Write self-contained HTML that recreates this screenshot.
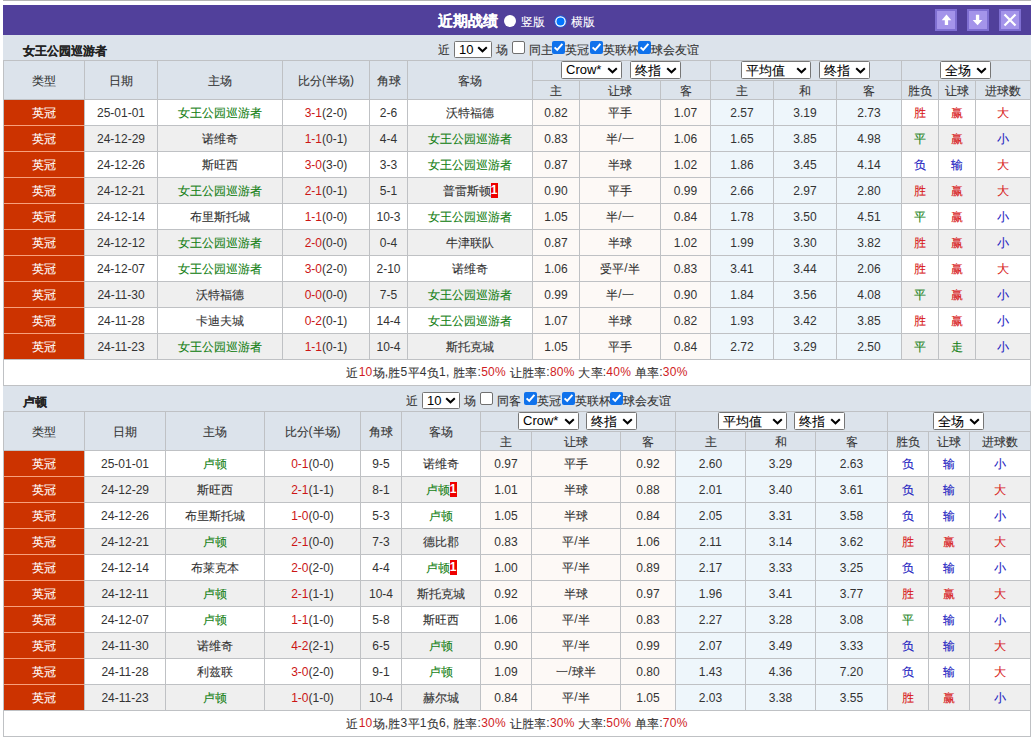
<!DOCTYPE html>
<html><head><meta charset="utf-8"><style>
html,body{margin:0;padding:0;background:#fff;width:1033px;height:739px;overflow:hidden;position:relative;font-family:"Liberation Sans",sans-serif;}
.c{position:absolute;display:flex;align-items:center;justify-content:center;white-space:nowrap;}
.sel{position:absolute;background:#fff;border:1px solid #767676;border-radius:1.5px;color:#000;white-space:nowrap;}
.k{position:relative;top:1px;-webkit-text-stroke:0.1px}
.badge{display:inline-block;background:#e00;color:#fff;font-weight:bold;font-size:12px;width:7px;height:15px;line-height:15px;text-align:center;vertical-align:middle;}
</style></head><body>
<div style="position:absolute;left:3px;top:0;width:1028px;height:1px;background:#b4b4b4"></div>
<div style="position:absolute;left:3px;top:5px;width:1028px;height:30px;background:#51409b;"></div>
<div style="position:absolute;left:438px;top:5px;height:30px;line-height:30px;font-size:15px;font-weight:bold;color:#fff"><span class="k">近期战绩</span></div>
<div style="position:absolute;left:504px;top:15px;width:12px;height:12px;border-radius:50%;background:#fff"></div>
<div style="position:absolute;left:521px;top:6px;height:30px;line-height:30px;font-size:12px;color:#fff;white-space:nowrap"><span class="k">竖版</span></div>
<svg style="position:absolute;left:554px;top:15px" width="13" height="13" viewBox="0 0 13 13"><circle cx="6.5" cy="6.5" r="6.2" fill="#1f5fd8"/><circle cx="6.5" cy="6.5" r="5.3" fill="#fff"/><circle cx="6.5" cy="6.5" r="4" fill="#0075ff"/></svg>
<div style="position:absolute;left:571px;top:6px;height:30px;line-height:30px;font-size:12px;color:#fff;white-space:nowrap"><span class="k">横版</span></div>
<div style="position:absolute;left:935px;top:9px;width:18px;height:18px;background:#a494ea;border:2px solid #7f6fd2"><svg style="position:absolute;left:-2px;top:-2px" width="22" height="22" viewBox="0 0 22 22"><path d="M11.5 5.5 L16.3 11.2 L13.1 11.2 L13.1 16 L9.8 16 L9.8 11.2 L6.7 11.2 Z" fill="#fff"/></svg></div>
<div style="position:absolute;left:967px;top:9px;width:18px;height:18px;background:#a494ea;border:2px solid #7f6fd2"><svg style="position:absolute;left:-2px;top:-2px" width="22" height="22" viewBox="0 0 22 22"><path d="M10.6 16.3 L15.4 11 L12.2 11 L12.2 5.7 L8.9 5.7 L8.9 11 L5.7 11 Z" fill="#fff"/></svg></div>
<div style="position:absolute;left:999px;top:9px;width:18px;height:18px;background:#a494ea;border:2px solid #7f6fd2"><svg style="position:absolute;left:-2px;top:-2px" width="22" height="22" viewBox="0 0 22 22"><path d="M5.5 5.5 L16.5 16.5 M16.5 5.5 L5.5 16.5" stroke="#fff" stroke-width="2.2"/></svg></div>
<div style="position:absolute;left:3px;top:35px;width:1028px;height:25px;background:#dce3eb;"></div>
<div style="position:absolute;left:23px;top:38px;height:25px;line-height:25px;font-size:12px;font-weight:bold;color:#222"><span class="k">女王公园巡游者</span></div>
<div style="position:absolute;left:3px;top:60px;width:1028px;height:39px;background:#dce3eb;"></div>
<div style="position:absolute;left:3px;top:100px;width:1027px;height:25px;background:#fff;"></div>
<div style="position:absolute;left:4px;top:100px;width:80px;height:25px;background:#cc3300;"></div>
<div style="position:absolute;left:533px;top:100px;width:177px;height:25px;background:#fdf9f6;"></div>
<div style="position:absolute;left:711px;top:100px;width:190px;height:25px;background:#eef6fb;"></div>
<div style="position:absolute;left:3px;top:126px;width:1027px;height:25px;background:#efefef;"></div>
<div style="position:absolute;left:4px;top:125px;width:80px;height:26px;background:#cc3300;"></div>
<div style="position:absolute;left:533px;top:126px;width:177px;height:25px;background:#fdf9f6;"></div>
<div style="position:absolute;left:711px;top:126px;width:190px;height:25px;background:#eef6fb;"></div>
<div style="position:absolute;left:3px;top:152px;width:1027px;height:25px;background:#fff;"></div>
<div style="position:absolute;left:4px;top:151px;width:80px;height:26px;background:#cc3300;"></div>
<div style="position:absolute;left:533px;top:152px;width:177px;height:25px;background:#fdf9f6;"></div>
<div style="position:absolute;left:711px;top:152px;width:190px;height:25px;background:#eef6fb;"></div>
<div style="position:absolute;left:3px;top:178px;width:1027px;height:25px;background:#efefef;"></div>
<div style="position:absolute;left:4px;top:177px;width:80px;height:26px;background:#cc3300;"></div>
<div style="position:absolute;left:533px;top:178px;width:177px;height:25px;background:#fdf9f6;"></div>
<div style="position:absolute;left:711px;top:178px;width:190px;height:25px;background:#eef6fb;"></div>
<div style="position:absolute;left:3px;top:204px;width:1027px;height:25px;background:#fff;"></div>
<div style="position:absolute;left:4px;top:203px;width:80px;height:26px;background:#cc3300;"></div>
<div style="position:absolute;left:533px;top:204px;width:177px;height:25px;background:#fdf9f6;"></div>
<div style="position:absolute;left:711px;top:204px;width:190px;height:25px;background:#eef6fb;"></div>
<div style="position:absolute;left:3px;top:230px;width:1027px;height:25px;background:#efefef;"></div>
<div style="position:absolute;left:4px;top:229px;width:80px;height:26px;background:#cc3300;"></div>
<div style="position:absolute;left:533px;top:230px;width:177px;height:25px;background:#fdf9f6;"></div>
<div style="position:absolute;left:711px;top:230px;width:190px;height:25px;background:#eef6fb;"></div>
<div style="position:absolute;left:3px;top:256px;width:1027px;height:25px;background:#fff;"></div>
<div style="position:absolute;left:4px;top:255px;width:80px;height:26px;background:#cc3300;"></div>
<div style="position:absolute;left:533px;top:256px;width:177px;height:25px;background:#fdf9f6;"></div>
<div style="position:absolute;left:711px;top:256px;width:190px;height:25px;background:#eef6fb;"></div>
<div style="position:absolute;left:3px;top:282px;width:1027px;height:25px;background:#efefef;"></div>
<div style="position:absolute;left:4px;top:281px;width:80px;height:26px;background:#cc3300;"></div>
<div style="position:absolute;left:533px;top:282px;width:177px;height:25px;background:#fdf9f6;"></div>
<div style="position:absolute;left:711px;top:282px;width:190px;height:25px;background:#eef6fb;"></div>
<div style="position:absolute;left:3px;top:308px;width:1027px;height:25px;background:#fff;"></div>
<div style="position:absolute;left:4px;top:307px;width:80px;height:26px;background:#cc3300;"></div>
<div style="position:absolute;left:533px;top:308px;width:177px;height:25px;background:#fdf9f6;"></div>
<div style="position:absolute;left:711px;top:308px;width:190px;height:25px;background:#eef6fb;"></div>
<div style="position:absolute;left:3px;top:334px;width:1027px;height:25px;background:#efefef;"></div>
<div style="position:absolute;left:4px;top:333px;width:80px;height:26px;background:#cc3300;"></div>
<div style="position:absolute;left:533px;top:334px;width:177px;height:25px;background:#fdf9f6;"></div>
<div style="position:absolute;left:711px;top:334px;width:190px;height:25px;background:#eef6fb;"></div>
<div style="position:absolute;left:3px;top:359px;width:1027px;height:26px;background:#fff;"></div>
<div style="position:absolute;left:3px;top:60px;width:1028px;height:1px;background:#bfc1c4;"></div>
<div style="position:absolute;left:532px;top:80px;width:498px;height:1px;background:#bfc1c4;"></div>
<div style="position:absolute;left:3px;top:99px;width:1028px;height:1px;background:#bfc1c4;"></div>
<div style="position:absolute;left:84px;top:125px;width:946px;height:1px;background:#bfc1c4;"></div>
<div style="position:absolute;left:4px;top:125px;width:80px;height:1px;background:#f7a07c;"></div>
<div style="position:absolute;left:84px;top:151px;width:946px;height:1px;background:#bfc1c4;"></div>
<div style="position:absolute;left:4px;top:151px;width:80px;height:1px;background:#f7a07c;"></div>
<div style="position:absolute;left:84px;top:177px;width:946px;height:1px;background:#bfc1c4;"></div>
<div style="position:absolute;left:4px;top:177px;width:80px;height:1px;background:#f7a07c;"></div>
<div style="position:absolute;left:84px;top:203px;width:946px;height:1px;background:#bfc1c4;"></div>
<div style="position:absolute;left:4px;top:203px;width:80px;height:1px;background:#f7a07c;"></div>
<div style="position:absolute;left:84px;top:229px;width:946px;height:1px;background:#bfc1c4;"></div>
<div style="position:absolute;left:4px;top:229px;width:80px;height:1px;background:#f7a07c;"></div>
<div style="position:absolute;left:84px;top:255px;width:946px;height:1px;background:#bfc1c4;"></div>
<div style="position:absolute;left:4px;top:255px;width:80px;height:1px;background:#f7a07c;"></div>
<div style="position:absolute;left:84px;top:281px;width:946px;height:1px;background:#bfc1c4;"></div>
<div style="position:absolute;left:4px;top:281px;width:80px;height:1px;background:#f7a07c;"></div>
<div style="position:absolute;left:84px;top:307px;width:946px;height:1px;background:#bfc1c4;"></div>
<div style="position:absolute;left:4px;top:307px;width:80px;height:1px;background:#f7a07c;"></div>
<div style="position:absolute;left:84px;top:333px;width:946px;height:1px;background:#bfc1c4;"></div>
<div style="position:absolute;left:4px;top:333px;width:80px;height:1px;background:#f7a07c;"></div>
<div style="position:absolute;left:84px;top:359px;width:946px;height:1px;background:#bfc1c4;"></div>
<div style="position:absolute;left:4px;top:359px;width:80px;height:1px;background:#bfc1c4;"></div>
<div style="position:absolute;left:3px;top:385px;width:1028px;height:1px;background:#bfc1c4;"></div>
<div style="position:absolute;left:3px;top:60px;width:1px;height:325px;background:#bfc1c4;"></div>
<div style="position:absolute;left:84px;top:60px;width:1px;height:299px;background:#bfc1c4;"></div>
<div style="position:absolute;left:157px;top:60px;width:1px;height:299px;background:#bfc1c4;"></div>
<div style="position:absolute;left:282px;top:60px;width:1px;height:299px;background:#bfc1c4;"></div>
<div style="position:absolute;left:369px;top:60px;width:1px;height:299px;background:#bfc1c4;"></div>
<div style="position:absolute;left:407px;top:60px;width:1px;height:299px;background:#bfc1c4;"></div>
<div style="position:absolute;left:532px;top:60px;width:1px;height:299px;background:#bfc1c4;"></div>
<div style="position:absolute;left:579px;top:80px;width:1px;height:279px;background:#bfc1c4;"></div>
<div style="position:absolute;left:660px;top:80px;width:1px;height:279px;background:#bfc1c4;"></div>
<div style="position:absolute;left:710px;top:60px;width:1px;height:299px;background:#bfc1c4;"></div>
<div style="position:absolute;left:773px;top:80px;width:1px;height:279px;background:#bfc1c4;"></div>
<div style="position:absolute;left:836px;top:80px;width:1px;height:279px;background:#bfc1c4;"></div>
<div style="position:absolute;left:901px;top:60px;width:1px;height:299px;background:#bfc1c4;"></div>
<div style="position:absolute;left:938px;top:80px;width:1px;height:279px;background:#bfc1c4;"></div>
<div style="position:absolute;left:975px;top:80px;width:1px;height:279px;background:#bfc1c4;"></div>
<div style="position:absolute;left:1030px;top:60px;width:1px;height:325px;background:#bfc1c4;"></div>
<div class="c" style="left:4px;top:61px;width:80px;height:38px;color:#333;font-size:12px;"><span><span class="k">类型</span></span></div>
<div class="c" style="left:85px;top:61px;width:72px;height:38px;color:#333;font-size:12px;"><span><span class="k">日期</span></span></div>
<div class="c" style="left:158px;top:61px;width:124px;height:38px;color:#333;font-size:12px;"><span><span class="k">主场</span></span></div>
<div class="c" style="left:283px;top:61px;width:86px;height:38px;color:#333;font-size:12px;"><span><span class="k">比分</span>(<span class="k">半场</span>)</span></div>
<div class="c" style="left:370px;top:61px;width:37px;height:38px;color:#333;font-size:12px;"><span><span class="k">角球</span></span></div>
<div class="c" style="left:408px;top:61px;width:124px;height:38px;color:#333;font-size:12px;"><span><span class="k">客场</span></span></div>
<div class="c" style="left:533px;top:81px;width:46px;height:18px;color:#333;font-size:12px;"><span><span class="k">主</span></span></div>
<div class="c" style="left:580px;top:81px;width:80px;height:18px;color:#333;font-size:12px;"><span><span class="k">让球</span></span></div>
<div class="c" style="left:661px;top:81px;width:49px;height:18px;color:#333;font-size:12px;"><span><span class="k">客</span></span></div>
<div class="c" style="left:711px;top:81px;width:62px;height:18px;color:#333;font-size:12px;"><span><span class="k">主</span></span></div>
<div class="c" style="left:774px;top:81px;width:62px;height:18px;color:#333;font-size:12px;"><span><span class="k">和</span></span></div>
<div class="c" style="left:837px;top:81px;width:64px;height:18px;color:#333;font-size:12px;"><span><span class="k">客</span></span></div>
<div class="c" style="left:902px;top:81px;width:36px;height:18px;color:#333;font-size:12px;"><span><span class="k">胜负</span></span></div>
<div class="c" style="left:939px;top:81px;width:36px;height:18px;color:#333;font-size:12px;"><span><span class="k">让球</span></span></div>
<div class="c" style="left:976px;top:81px;width:54px;height:18px;color:#333;font-size:12px;"><span><span class="k">进球数</span></span></div>
<div class="c" style="left:4px;top:100px;width:80px;height:25px;color:#fff;font-size:12px;-webkit-text-stroke:0.2px #fff"><span><span class="k">英冠</span></span></div>
<div class="c" style="left:85px;top:100px;width:72px;height:25px;color:#333;font-size:12px;"><span>25-01-01</span></div>
<div class="c" style="left:158px;top:100px;width:124px;height:25px;color:#157f15;font-size:12px;"><span><span class="k">女王公园巡游者</span></span></div>
<div class="c" style="left:283px;top:100px;width:86px;height:25px;color:#333;font-size:12px;"><span><span style="color:#cc1515">3-1</span>(2-0)</span></div>
<div class="c" style="left:370px;top:100px;width:37px;height:25px;color:#333;font-size:12px;"><span>2-6</span></div>
<div class="c" style="left:408px;top:100px;width:124px;height:25px;color:#333;font-size:12px;"><span><span class="k">沃特福德</span></span></div>
<div class="c" style="left:533px;top:100px;width:46px;height:25px;color:#333;font-size:12px;"><span>0.82</span></div>
<div class="c" style="left:580px;top:100px;width:80px;height:25px;color:#333;font-size:12px;"><span><span class="k">平手</span></span></div>
<div class="c" style="left:661px;top:100px;width:49px;height:25px;color:#333;font-size:12px;"><span>1.07</span></div>
<div class="c" style="left:711px;top:100px;width:62px;height:25px;color:#333;font-size:12px;"><span>2.57</span></div>
<div class="c" style="left:774px;top:100px;width:62px;height:25px;color:#333;font-size:12px;"><span>3.19</span></div>
<div class="c" style="left:837px;top:100px;width:64px;height:25px;color:#333;font-size:12px;"><span>2.73</span></div>
<div class="c" style="left:902px;top:100px;width:36px;height:25px;color:#d81818;font-size:12px;"><span><span class="k">胜</span></span></div>
<div class="c" style="left:939px;top:100px;width:36px;height:25px;color:#d81818;font-size:12px;"><span><span class="k">赢</span></span></div>
<div class="c" style="left:976px;top:100px;width:54px;height:25px;color:#d81818;font-size:12px;"><span><span class="k">大</span></span></div>
<div class="c" style="left:4px;top:126px;width:80px;height:25px;color:#fff;font-size:12px;-webkit-text-stroke:0.2px #fff"><span><span class="k">英冠</span></span></div>
<div class="c" style="left:85px;top:126px;width:72px;height:25px;color:#333;font-size:12px;"><span>24-12-29</span></div>
<div class="c" style="left:158px;top:126px;width:124px;height:25px;color:#333;font-size:12px;"><span><span class="k">诺维奇</span></span></div>
<div class="c" style="left:283px;top:126px;width:86px;height:25px;color:#333;font-size:12px;"><span><span style="color:#cc1515">1-1</span>(0-1)</span></div>
<div class="c" style="left:370px;top:126px;width:37px;height:25px;color:#333;font-size:12px;"><span>4-4</span></div>
<div class="c" style="left:408px;top:126px;width:124px;height:25px;color:#157f15;font-size:12px;"><span><span class="k">女王公园巡游者</span></span></div>
<div class="c" style="left:533px;top:126px;width:46px;height:25px;color:#333;font-size:12px;"><span>0.83</span></div>
<div class="c" style="left:580px;top:126px;width:80px;height:25px;color:#333;font-size:12px;"><span><span class="k">半</span>/<span class="k">一</span></span></div>
<div class="c" style="left:661px;top:126px;width:49px;height:25px;color:#333;font-size:12px;"><span>1.06</span></div>
<div class="c" style="left:711px;top:126px;width:62px;height:25px;color:#333;font-size:12px;"><span>1.65</span></div>
<div class="c" style="left:774px;top:126px;width:62px;height:25px;color:#333;font-size:12px;"><span>3.85</span></div>
<div class="c" style="left:837px;top:126px;width:64px;height:25px;color:#333;font-size:12px;"><span>4.98</span></div>
<div class="c" style="left:902px;top:126px;width:36px;height:25px;color:#157f15;font-size:12px;"><span><span class="k">平</span></span></div>
<div class="c" style="left:939px;top:126px;width:36px;height:25px;color:#d81818;font-size:12px;"><span><span class="k">赢</span></span></div>
<div class="c" style="left:976px;top:126px;width:54px;height:25px;color:#1818c0;font-size:12px;"><span><span class="k">小</span></span></div>
<div class="c" style="left:4px;top:152px;width:80px;height:25px;color:#fff;font-size:12px;-webkit-text-stroke:0.2px #fff"><span><span class="k">英冠</span></span></div>
<div class="c" style="left:85px;top:152px;width:72px;height:25px;color:#333;font-size:12px;"><span>24-12-26</span></div>
<div class="c" style="left:158px;top:152px;width:124px;height:25px;color:#333;font-size:12px;"><span><span class="k">斯旺西</span></span></div>
<div class="c" style="left:283px;top:152px;width:86px;height:25px;color:#333;font-size:12px;"><span><span style="color:#cc1515">3-0</span>(3-0)</span></div>
<div class="c" style="left:370px;top:152px;width:37px;height:25px;color:#333;font-size:12px;"><span>3-3</span></div>
<div class="c" style="left:408px;top:152px;width:124px;height:25px;color:#157f15;font-size:12px;"><span><span class="k">女王公园巡游者</span></span></div>
<div class="c" style="left:533px;top:152px;width:46px;height:25px;color:#333;font-size:12px;"><span>0.87</span></div>
<div class="c" style="left:580px;top:152px;width:80px;height:25px;color:#333;font-size:12px;"><span><span class="k">半球</span></span></div>
<div class="c" style="left:661px;top:152px;width:49px;height:25px;color:#333;font-size:12px;"><span>1.02</span></div>
<div class="c" style="left:711px;top:152px;width:62px;height:25px;color:#333;font-size:12px;"><span>1.86</span></div>
<div class="c" style="left:774px;top:152px;width:62px;height:25px;color:#333;font-size:12px;"><span>3.45</span></div>
<div class="c" style="left:837px;top:152px;width:64px;height:25px;color:#333;font-size:12px;"><span>4.14</span></div>
<div class="c" style="left:902px;top:152px;width:36px;height:25px;color:#1818c0;font-size:12px;"><span><span class="k">负</span></span></div>
<div class="c" style="left:939px;top:152px;width:36px;height:25px;color:#1818c0;font-size:12px;"><span><span class="k">输</span></span></div>
<div class="c" style="left:976px;top:152px;width:54px;height:25px;color:#d81818;font-size:12px;"><span><span class="k">大</span></span></div>
<div class="c" style="left:4px;top:178px;width:80px;height:25px;color:#fff;font-size:12px;-webkit-text-stroke:0.2px #fff"><span><span class="k">英冠</span></span></div>
<div class="c" style="left:85px;top:178px;width:72px;height:25px;color:#333;font-size:12px;"><span>24-12-21</span></div>
<div class="c" style="left:158px;top:178px;width:124px;height:25px;color:#157f15;font-size:12px;"><span><span class="k">女王公园巡游者</span></span></div>
<div class="c" style="left:283px;top:178px;width:86px;height:25px;color:#333;font-size:12px;"><span><span style="color:#cc1515">2-1</span>(0-1)</span></div>
<div class="c" style="left:370px;top:178px;width:37px;height:25px;color:#333;font-size:12px;"><span>5-1</span></div>
<div class="c" style="left:408px;top:178px;width:124px;height:25px;color:#333;font-size:12px;"><span><span class="k">普雷斯顿</span><span class="badge">1</span></span></div>
<div class="c" style="left:533px;top:178px;width:46px;height:25px;color:#333;font-size:12px;"><span>0.90</span></div>
<div class="c" style="left:580px;top:178px;width:80px;height:25px;color:#333;font-size:12px;"><span><span class="k">平手</span></span></div>
<div class="c" style="left:661px;top:178px;width:49px;height:25px;color:#333;font-size:12px;"><span>0.99</span></div>
<div class="c" style="left:711px;top:178px;width:62px;height:25px;color:#333;font-size:12px;"><span>2.66</span></div>
<div class="c" style="left:774px;top:178px;width:62px;height:25px;color:#333;font-size:12px;"><span>2.97</span></div>
<div class="c" style="left:837px;top:178px;width:64px;height:25px;color:#333;font-size:12px;"><span>2.80</span></div>
<div class="c" style="left:902px;top:178px;width:36px;height:25px;color:#d81818;font-size:12px;"><span><span class="k">胜</span></span></div>
<div class="c" style="left:939px;top:178px;width:36px;height:25px;color:#d81818;font-size:12px;"><span><span class="k">赢</span></span></div>
<div class="c" style="left:976px;top:178px;width:54px;height:25px;color:#d81818;font-size:12px;"><span><span class="k">大</span></span></div>
<div class="c" style="left:4px;top:204px;width:80px;height:25px;color:#fff;font-size:12px;-webkit-text-stroke:0.2px #fff"><span><span class="k">英冠</span></span></div>
<div class="c" style="left:85px;top:204px;width:72px;height:25px;color:#333;font-size:12px;"><span>24-12-14</span></div>
<div class="c" style="left:158px;top:204px;width:124px;height:25px;color:#333;font-size:12px;"><span><span class="k">布里斯托城</span></span></div>
<div class="c" style="left:283px;top:204px;width:86px;height:25px;color:#333;font-size:12px;"><span><span style="color:#cc1515">1-1</span>(0-0)</span></div>
<div class="c" style="left:370px;top:204px;width:37px;height:25px;color:#333;font-size:12px;"><span>10-3</span></div>
<div class="c" style="left:408px;top:204px;width:124px;height:25px;color:#157f15;font-size:12px;"><span><span class="k">女王公园巡游者</span></span></div>
<div class="c" style="left:533px;top:204px;width:46px;height:25px;color:#333;font-size:12px;"><span>1.05</span></div>
<div class="c" style="left:580px;top:204px;width:80px;height:25px;color:#333;font-size:12px;"><span><span class="k">半</span>/<span class="k">一</span></span></div>
<div class="c" style="left:661px;top:204px;width:49px;height:25px;color:#333;font-size:12px;"><span>0.84</span></div>
<div class="c" style="left:711px;top:204px;width:62px;height:25px;color:#333;font-size:12px;"><span>1.78</span></div>
<div class="c" style="left:774px;top:204px;width:62px;height:25px;color:#333;font-size:12px;"><span>3.50</span></div>
<div class="c" style="left:837px;top:204px;width:64px;height:25px;color:#333;font-size:12px;"><span>4.51</span></div>
<div class="c" style="left:902px;top:204px;width:36px;height:25px;color:#157f15;font-size:12px;"><span><span class="k">平</span></span></div>
<div class="c" style="left:939px;top:204px;width:36px;height:25px;color:#d81818;font-size:12px;"><span><span class="k">赢</span></span></div>
<div class="c" style="left:976px;top:204px;width:54px;height:25px;color:#1818c0;font-size:12px;"><span><span class="k">小</span></span></div>
<div class="c" style="left:4px;top:230px;width:80px;height:25px;color:#fff;font-size:12px;-webkit-text-stroke:0.2px #fff"><span><span class="k">英冠</span></span></div>
<div class="c" style="left:85px;top:230px;width:72px;height:25px;color:#333;font-size:12px;"><span>24-12-12</span></div>
<div class="c" style="left:158px;top:230px;width:124px;height:25px;color:#157f15;font-size:12px;"><span><span class="k">女王公园巡游者</span></span></div>
<div class="c" style="left:283px;top:230px;width:86px;height:25px;color:#333;font-size:12px;"><span><span style="color:#cc1515">2-0</span>(0-0)</span></div>
<div class="c" style="left:370px;top:230px;width:37px;height:25px;color:#333;font-size:12px;"><span>0-4</span></div>
<div class="c" style="left:408px;top:230px;width:124px;height:25px;color:#333;font-size:12px;"><span><span class="k">牛津联队</span></span></div>
<div class="c" style="left:533px;top:230px;width:46px;height:25px;color:#333;font-size:12px;"><span>0.87</span></div>
<div class="c" style="left:580px;top:230px;width:80px;height:25px;color:#333;font-size:12px;"><span><span class="k">半球</span></span></div>
<div class="c" style="left:661px;top:230px;width:49px;height:25px;color:#333;font-size:12px;"><span>1.02</span></div>
<div class="c" style="left:711px;top:230px;width:62px;height:25px;color:#333;font-size:12px;"><span>1.99</span></div>
<div class="c" style="left:774px;top:230px;width:62px;height:25px;color:#333;font-size:12px;"><span>3.30</span></div>
<div class="c" style="left:837px;top:230px;width:64px;height:25px;color:#333;font-size:12px;"><span>3.82</span></div>
<div class="c" style="left:902px;top:230px;width:36px;height:25px;color:#d81818;font-size:12px;"><span><span class="k">胜</span></span></div>
<div class="c" style="left:939px;top:230px;width:36px;height:25px;color:#d81818;font-size:12px;"><span><span class="k">赢</span></span></div>
<div class="c" style="left:976px;top:230px;width:54px;height:25px;color:#1818c0;font-size:12px;"><span><span class="k">小</span></span></div>
<div class="c" style="left:4px;top:256px;width:80px;height:25px;color:#fff;font-size:12px;-webkit-text-stroke:0.2px #fff"><span><span class="k">英冠</span></span></div>
<div class="c" style="left:85px;top:256px;width:72px;height:25px;color:#333;font-size:12px;"><span>24-12-07</span></div>
<div class="c" style="left:158px;top:256px;width:124px;height:25px;color:#157f15;font-size:12px;"><span><span class="k">女王公园巡游者</span></span></div>
<div class="c" style="left:283px;top:256px;width:86px;height:25px;color:#333;font-size:12px;"><span><span style="color:#cc1515">3-0</span>(2-0)</span></div>
<div class="c" style="left:370px;top:256px;width:37px;height:25px;color:#333;font-size:12px;"><span>2-10</span></div>
<div class="c" style="left:408px;top:256px;width:124px;height:25px;color:#333;font-size:12px;"><span><span class="k">诺维奇</span></span></div>
<div class="c" style="left:533px;top:256px;width:46px;height:25px;color:#333;font-size:12px;"><span>1.06</span></div>
<div class="c" style="left:580px;top:256px;width:80px;height:25px;color:#333;font-size:12px;"><span><span class="k">受平</span>/<span class="k">半</span></span></div>
<div class="c" style="left:661px;top:256px;width:49px;height:25px;color:#333;font-size:12px;"><span>0.83</span></div>
<div class="c" style="left:711px;top:256px;width:62px;height:25px;color:#333;font-size:12px;"><span>3.41</span></div>
<div class="c" style="left:774px;top:256px;width:62px;height:25px;color:#333;font-size:12px;"><span>3.44</span></div>
<div class="c" style="left:837px;top:256px;width:64px;height:25px;color:#333;font-size:12px;"><span>2.06</span></div>
<div class="c" style="left:902px;top:256px;width:36px;height:25px;color:#d81818;font-size:12px;"><span><span class="k">胜</span></span></div>
<div class="c" style="left:939px;top:256px;width:36px;height:25px;color:#d81818;font-size:12px;"><span><span class="k">赢</span></span></div>
<div class="c" style="left:976px;top:256px;width:54px;height:25px;color:#d81818;font-size:12px;"><span><span class="k">大</span></span></div>
<div class="c" style="left:4px;top:282px;width:80px;height:25px;color:#fff;font-size:12px;-webkit-text-stroke:0.2px #fff"><span><span class="k">英冠</span></span></div>
<div class="c" style="left:85px;top:282px;width:72px;height:25px;color:#333;font-size:12px;"><span>24-11-30</span></div>
<div class="c" style="left:158px;top:282px;width:124px;height:25px;color:#333;font-size:12px;"><span><span class="k">沃特福德</span></span></div>
<div class="c" style="left:283px;top:282px;width:86px;height:25px;color:#333;font-size:12px;"><span><span style="color:#cc1515">0-0</span>(0-0)</span></div>
<div class="c" style="left:370px;top:282px;width:37px;height:25px;color:#333;font-size:12px;"><span>7-5</span></div>
<div class="c" style="left:408px;top:282px;width:124px;height:25px;color:#157f15;font-size:12px;"><span><span class="k">女王公园巡游者</span></span></div>
<div class="c" style="left:533px;top:282px;width:46px;height:25px;color:#333;font-size:12px;"><span>0.99</span></div>
<div class="c" style="left:580px;top:282px;width:80px;height:25px;color:#333;font-size:12px;"><span><span class="k">半</span>/<span class="k">一</span></span></div>
<div class="c" style="left:661px;top:282px;width:49px;height:25px;color:#333;font-size:12px;"><span>0.90</span></div>
<div class="c" style="left:711px;top:282px;width:62px;height:25px;color:#333;font-size:12px;"><span>1.84</span></div>
<div class="c" style="left:774px;top:282px;width:62px;height:25px;color:#333;font-size:12px;"><span>3.56</span></div>
<div class="c" style="left:837px;top:282px;width:64px;height:25px;color:#333;font-size:12px;"><span>4.08</span></div>
<div class="c" style="left:902px;top:282px;width:36px;height:25px;color:#157f15;font-size:12px;"><span><span class="k">平</span></span></div>
<div class="c" style="left:939px;top:282px;width:36px;height:25px;color:#d81818;font-size:12px;"><span><span class="k">赢</span></span></div>
<div class="c" style="left:976px;top:282px;width:54px;height:25px;color:#1818c0;font-size:12px;"><span><span class="k">小</span></span></div>
<div class="c" style="left:4px;top:308px;width:80px;height:25px;color:#fff;font-size:12px;-webkit-text-stroke:0.2px #fff"><span><span class="k">英冠</span></span></div>
<div class="c" style="left:85px;top:308px;width:72px;height:25px;color:#333;font-size:12px;"><span>24-11-28</span></div>
<div class="c" style="left:158px;top:308px;width:124px;height:25px;color:#333;font-size:12px;"><span><span class="k">卡迪夫城</span></span></div>
<div class="c" style="left:283px;top:308px;width:86px;height:25px;color:#333;font-size:12px;"><span><span style="color:#cc1515">0-2</span>(0-1)</span></div>
<div class="c" style="left:370px;top:308px;width:37px;height:25px;color:#333;font-size:12px;"><span>14-4</span></div>
<div class="c" style="left:408px;top:308px;width:124px;height:25px;color:#157f15;font-size:12px;"><span><span class="k">女王公园巡游者</span></span></div>
<div class="c" style="left:533px;top:308px;width:46px;height:25px;color:#333;font-size:12px;"><span>1.07</span></div>
<div class="c" style="left:580px;top:308px;width:80px;height:25px;color:#333;font-size:12px;"><span><span class="k">半球</span></span></div>
<div class="c" style="left:661px;top:308px;width:49px;height:25px;color:#333;font-size:12px;"><span>0.82</span></div>
<div class="c" style="left:711px;top:308px;width:62px;height:25px;color:#333;font-size:12px;"><span>1.93</span></div>
<div class="c" style="left:774px;top:308px;width:62px;height:25px;color:#333;font-size:12px;"><span>3.42</span></div>
<div class="c" style="left:837px;top:308px;width:64px;height:25px;color:#333;font-size:12px;"><span>3.85</span></div>
<div class="c" style="left:902px;top:308px;width:36px;height:25px;color:#d81818;font-size:12px;"><span><span class="k">胜</span></span></div>
<div class="c" style="left:939px;top:308px;width:36px;height:25px;color:#d81818;font-size:12px;"><span><span class="k">赢</span></span></div>
<div class="c" style="left:976px;top:308px;width:54px;height:25px;color:#1818c0;font-size:12px;"><span><span class="k">小</span></span></div>
<div class="c" style="left:4px;top:334px;width:80px;height:25px;color:#fff;font-size:12px;-webkit-text-stroke:0.2px #fff"><span><span class="k">英冠</span></span></div>
<div class="c" style="left:85px;top:334px;width:72px;height:25px;color:#333;font-size:12px;"><span>24-11-23</span></div>
<div class="c" style="left:158px;top:334px;width:124px;height:25px;color:#157f15;font-size:12px;"><span><span class="k">女王公园巡游者</span></span></div>
<div class="c" style="left:283px;top:334px;width:86px;height:25px;color:#333;font-size:12px;"><span><span style="color:#cc1515">1-1</span>(0-1)</span></div>
<div class="c" style="left:370px;top:334px;width:37px;height:25px;color:#333;font-size:12px;"><span>10-4</span></div>
<div class="c" style="left:408px;top:334px;width:124px;height:25px;color:#333;font-size:12px;"><span><span class="k">斯托克城</span></span></div>
<div class="c" style="left:533px;top:334px;width:46px;height:25px;color:#333;font-size:12px;"><span>1.05</span></div>
<div class="c" style="left:580px;top:334px;width:80px;height:25px;color:#333;font-size:12px;"><span><span class="k">平手</span></span></div>
<div class="c" style="left:661px;top:334px;width:49px;height:25px;color:#333;font-size:12px;"><span>0.84</span></div>
<div class="c" style="left:711px;top:334px;width:62px;height:25px;color:#333;font-size:12px;"><span>2.72</span></div>
<div class="c" style="left:774px;top:334px;width:62px;height:25px;color:#333;font-size:12px;"><span>3.29</span></div>
<div class="c" style="left:837px;top:334px;width:64px;height:25px;color:#333;font-size:12px;"><span>2.50</span></div>
<div class="c" style="left:902px;top:334px;width:36px;height:25px;color:#157f15;font-size:12px;"><span><span class="k">平</span></span></div>
<div class="c" style="left:939px;top:334px;width:36px;height:25px;color:#157f15;font-size:12px;"><span><span class="k">走</span></span></div>
<div class="c" style="left:976px;top:334px;width:54px;height:25px;color:#1818c0;font-size:12px;"><span><span class="k">小</span></span></div>
<div class="c" style="left:4px;top:360px;width:1026px;height:25px;color:#333;font-size:12px;letter-spacing:0.25px"><span><span class="k">近</span><span style="color:#d01c24">10</span><span class="k">场</span>,<span class="k">胜</span>5<span class="k">平</span>4<span class="k">负</span>1, <span class="k">胜率</span>:<span style="color:#d01c24">50%</span> <span class="k">让胜率</span>:<span style="color:#d01c24">80%</span> <span class="k">大率</span>:<span style="color:#d01c24">40%</span> <span class="k">单率</span>:<span style="color:#d01c24">30%</span></span></div>
<div style="position:absolute;left:438px;top:37px;height:25px;line-height:25px;font-size:12px;color:#333;white-space:nowrap"><span class="k">近</span></div>
<div class="sel" style="left:454px;top:41px;width:36px;height:15px;font-size:13px;line-height:15px"><span style="padding-left:4px">10</span><svg style="position:absolute;right:3px;top:4px" width="11" height="7" viewBox="0 0 11 7"><path d="M1.2 1.2 L5.5 5.3 L9.8 1.2" stroke="#000" stroke-width="2" fill="none"/></svg></div>
<div style="position:absolute;left:496px;top:37px;height:25px;line-height:25px;font-size:12px;color:#333;white-space:nowrap"><span class="k">场</span></div>
<div style="position:absolute;left:512px;top:41px;width:11px;height:11px;background:#fff;border:1px solid #707070;border-radius:2px"></div>
<div style="position:absolute;left:529px;top:37px;height:25px;line-height:25px;font-size:12px;color:#333;white-space:nowrap"><span class="k">同主</span></div>
<div style="position:absolute;left:552px;top:41px;width:13px;height:13px;background:#0f72ec;border-radius:2px"><svg style="position:absolute;left:0;top:0" width="13" height="13" viewBox="0 0 13 13"><path d="M2.6 6.4 L5.2 8.9 L10.4 2.9" stroke="#fff" stroke-width="2" fill="none"/></svg></div>
<div style="position:absolute;left:565px;top:37px;height:25px;line-height:25px;font-size:12px;color:#333;white-space:nowrap"><span class="k">英冠</span></div>
<div style="position:absolute;left:590px;top:41px;width:13px;height:13px;background:#0f72ec;border-radius:2px"><svg style="position:absolute;left:0;top:0" width="13" height="13" viewBox="0 0 13 13"><path d="M2.6 6.4 L5.2 8.9 L10.4 2.9" stroke="#fff" stroke-width="2" fill="none"/></svg></div>
<div style="position:absolute;left:603px;top:37px;height:25px;line-height:25px;font-size:12px;color:#333;white-space:nowrap"><span class="k">英联杯</span></div>
<div style="position:absolute;left:638px;top:41px;width:13px;height:13px;background:#0f72ec;border-radius:2px"><svg style="position:absolute;left:0;top:0" width="13" height="13" viewBox="0 0 13 13"><path d="M2.6 6.4 L5.2 8.9 L10.4 2.9" stroke="#fff" stroke-width="2" fill="none"/></svg></div>
<div style="position:absolute;left:651px;top:37px;height:25px;line-height:25px;font-size:12px;color:#333;white-space:nowrap"><span class="k">球会友谊</span></div>
<div class="sel" style="left:561px;top:61px;width:59px;height:16px;font-size:13px;line-height:16px"><span style="padding-left:4px">Crow*</span><svg style="position:absolute;right:3px;top:5px" width="11" height="7" viewBox="0 0 11 7"><path d="M1.2 1.2 L5.5 5.3 L9.8 1.2" stroke="#000" stroke-width="2" fill="none"/></svg></div>
<div class="sel" style="left:630px;top:61px;width:49px;height:16px;font-size:13px;line-height:16px"><span style="padding-left:4px"><span class="k">终指</span></span><svg style="position:absolute;right:3px;top:5px" width="11" height="7" viewBox="0 0 11 7"><path d="M1.2 1.2 L5.5 5.3 L9.8 1.2" stroke="#000" stroke-width="2" fill="none"/></svg></div>
<div class="sel" style="left:741px;top:61px;width:68px;height:16px;font-size:13px;line-height:16px"><span style="padding-left:4px"><span class="k">平均值</span></span><svg style="position:absolute;right:3px;top:5px" width="11" height="7" viewBox="0 0 11 7"><path d="M1.2 1.2 L5.5 5.3 L9.8 1.2" stroke="#000" stroke-width="2" fill="none"/></svg></div>
<div class="sel" style="left:819px;top:61px;width:49px;height:16px;font-size:13px;line-height:16px"><span style="padding-left:4px"><span class="k">终指</span></span><svg style="position:absolute;right:3px;top:5px" width="11" height="7" viewBox="0 0 11 7"><path d="M1.2 1.2 L5.5 5.3 L9.8 1.2" stroke="#000" stroke-width="2" fill="none"/></svg></div>
<div class="sel" style="left:940px;top:61px;width:49px;height:16px;font-size:13px;line-height:16px"><span style="padding-left:4px"><span class="k">全场</span></span><svg style="position:absolute;right:3px;top:5px" width="11" height="7" viewBox="0 0 11 7"><path d="M1.2 1.2 L5.5 5.3 L9.8 1.2" stroke="#000" stroke-width="2" fill="none"/></svg></div>
<div style="position:absolute;left:3px;top:386px;width:1028px;height:25px;background:#dce3eb;"></div>
<div style="position:absolute;left:23px;top:389px;height:25px;line-height:25px;font-size:12px;font-weight:bold;color:#222"><span class="k">卢顿</span></div>
<div style="position:absolute;left:3px;top:411px;width:1028px;height:39px;background:#dce3eb;"></div>
<div style="position:absolute;left:3px;top:451px;width:1027px;height:25px;background:#fff;"></div>
<div style="position:absolute;left:4px;top:451px;width:80px;height:25px;background:#cc3300;"></div>
<div style="position:absolute;left:481px;top:451px;width:194px;height:25px;background:#fdf9f6;"></div>
<div style="position:absolute;left:676px;top:451px;width:211px;height:25px;background:#eef6fb;"></div>
<div style="position:absolute;left:3px;top:477px;width:1027px;height:25px;background:#efefef;"></div>
<div style="position:absolute;left:4px;top:476px;width:80px;height:26px;background:#cc3300;"></div>
<div style="position:absolute;left:481px;top:477px;width:194px;height:25px;background:#fdf9f6;"></div>
<div style="position:absolute;left:676px;top:477px;width:211px;height:25px;background:#eef6fb;"></div>
<div style="position:absolute;left:3px;top:503px;width:1027px;height:25px;background:#fff;"></div>
<div style="position:absolute;left:4px;top:502px;width:80px;height:26px;background:#cc3300;"></div>
<div style="position:absolute;left:481px;top:503px;width:194px;height:25px;background:#fdf9f6;"></div>
<div style="position:absolute;left:676px;top:503px;width:211px;height:25px;background:#eef6fb;"></div>
<div style="position:absolute;left:3px;top:529px;width:1027px;height:25px;background:#efefef;"></div>
<div style="position:absolute;left:4px;top:528px;width:80px;height:26px;background:#cc3300;"></div>
<div style="position:absolute;left:481px;top:529px;width:194px;height:25px;background:#fdf9f6;"></div>
<div style="position:absolute;left:676px;top:529px;width:211px;height:25px;background:#eef6fb;"></div>
<div style="position:absolute;left:3px;top:555px;width:1027px;height:25px;background:#fff;"></div>
<div style="position:absolute;left:4px;top:554px;width:80px;height:26px;background:#cc3300;"></div>
<div style="position:absolute;left:481px;top:555px;width:194px;height:25px;background:#fdf9f6;"></div>
<div style="position:absolute;left:676px;top:555px;width:211px;height:25px;background:#eef6fb;"></div>
<div style="position:absolute;left:3px;top:581px;width:1027px;height:25px;background:#efefef;"></div>
<div style="position:absolute;left:4px;top:580px;width:80px;height:26px;background:#cc3300;"></div>
<div style="position:absolute;left:481px;top:581px;width:194px;height:25px;background:#fdf9f6;"></div>
<div style="position:absolute;left:676px;top:581px;width:211px;height:25px;background:#eef6fb;"></div>
<div style="position:absolute;left:3px;top:607px;width:1027px;height:25px;background:#fff;"></div>
<div style="position:absolute;left:4px;top:606px;width:80px;height:26px;background:#cc3300;"></div>
<div style="position:absolute;left:481px;top:607px;width:194px;height:25px;background:#fdf9f6;"></div>
<div style="position:absolute;left:676px;top:607px;width:211px;height:25px;background:#eef6fb;"></div>
<div style="position:absolute;left:3px;top:633px;width:1027px;height:25px;background:#efefef;"></div>
<div style="position:absolute;left:4px;top:632px;width:80px;height:26px;background:#cc3300;"></div>
<div style="position:absolute;left:481px;top:633px;width:194px;height:25px;background:#fdf9f6;"></div>
<div style="position:absolute;left:676px;top:633px;width:211px;height:25px;background:#eef6fb;"></div>
<div style="position:absolute;left:3px;top:659px;width:1027px;height:25px;background:#fff;"></div>
<div style="position:absolute;left:4px;top:658px;width:80px;height:26px;background:#cc3300;"></div>
<div style="position:absolute;left:481px;top:659px;width:194px;height:25px;background:#fdf9f6;"></div>
<div style="position:absolute;left:676px;top:659px;width:211px;height:25px;background:#eef6fb;"></div>
<div style="position:absolute;left:3px;top:685px;width:1027px;height:25px;background:#efefef;"></div>
<div style="position:absolute;left:4px;top:684px;width:80px;height:26px;background:#cc3300;"></div>
<div style="position:absolute;left:481px;top:685px;width:194px;height:25px;background:#fdf9f6;"></div>
<div style="position:absolute;left:676px;top:685px;width:211px;height:25px;background:#eef6fb;"></div>
<div style="position:absolute;left:3px;top:710px;width:1027px;height:26px;background:#fff;"></div>
<div style="position:absolute;left:3px;top:411px;width:1028px;height:1px;background:#bfc1c4;"></div>
<div style="position:absolute;left:480px;top:431px;width:550px;height:1px;background:#bfc1c4;"></div>
<div style="position:absolute;left:3px;top:450px;width:1028px;height:1px;background:#bfc1c4;"></div>
<div style="position:absolute;left:84px;top:476px;width:946px;height:1px;background:#bfc1c4;"></div>
<div style="position:absolute;left:4px;top:476px;width:80px;height:1px;background:#f7a07c;"></div>
<div style="position:absolute;left:84px;top:502px;width:946px;height:1px;background:#bfc1c4;"></div>
<div style="position:absolute;left:4px;top:502px;width:80px;height:1px;background:#f7a07c;"></div>
<div style="position:absolute;left:84px;top:528px;width:946px;height:1px;background:#bfc1c4;"></div>
<div style="position:absolute;left:4px;top:528px;width:80px;height:1px;background:#f7a07c;"></div>
<div style="position:absolute;left:84px;top:554px;width:946px;height:1px;background:#bfc1c4;"></div>
<div style="position:absolute;left:4px;top:554px;width:80px;height:1px;background:#f7a07c;"></div>
<div style="position:absolute;left:84px;top:580px;width:946px;height:1px;background:#bfc1c4;"></div>
<div style="position:absolute;left:4px;top:580px;width:80px;height:1px;background:#f7a07c;"></div>
<div style="position:absolute;left:84px;top:606px;width:946px;height:1px;background:#bfc1c4;"></div>
<div style="position:absolute;left:4px;top:606px;width:80px;height:1px;background:#f7a07c;"></div>
<div style="position:absolute;left:84px;top:632px;width:946px;height:1px;background:#bfc1c4;"></div>
<div style="position:absolute;left:4px;top:632px;width:80px;height:1px;background:#f7a07c;"></div>
<div style="position:absolute;left:84px;top:658px;width:946px;height:1px;background:#bfc1c4;"></div>
<div style="position:absolute;left:4px;top:658px;width:80px;height:1px;background:#f7a07c;"></div>
<div style="position:absolute;left:84px;top:684px;width:946px;height:1px;background:#bfc1c4;"></div>
<div style="position:absolute;left:4px;top:684px;width:80px;height:1px;background:#f7a07c;"></div>
<div style="position:absolute;left:84px;top:710px;width:946px;height:1px;background:#bfc1c4;"></div>
<div style="position:absolute;left:4px;top:710px;width:80px;height:1px;background:#bfc1c4;"></div>
<div style="position:absolute;left:3px;top:736px;width:1028px;height:1px;background:#bfc1c4;"></div>
<div style="position:absolute;left:3px;top:411px;width:1px;height:325px;background:#bfc1c4;"></div>
<div style="position:absolute;left:84px;top:411px;width:1px;height:299px;background:#bfc1c4;"></div>
<div style="position:absolute;left:165px;top:411px;width:1px;height:299px;background:#bfc1c4;"></div>
<div style="position:absolute;left:264px;top:411px;width:1px;height:299px;background:#bfc1c4;"></div>
<div style="position:absolute;left:360px;top:411px;width:1px;height:299px;background:#bfc1c4;"></div>
<div style="position:absolute;left:401px;top:411px;width:1px;height:299px;background:#bfc1c4;"></div>
<div style="position:absolute;left:480px;top:411px;width:1px;height:299px;background:#bfc1c4;"></div>
<div style="position:absolute;left:531px;top:431px;width:1px;height:279px;background:#bfc1c4;"></div>
<div style="position:absolute;left:620px;top:431px;width:1px;height:279px;background:#bfc1c4;"></div>
<div style="position:absolute;left:675px;top:411px;width:1px;height:299px;background:#bfc1c4;"></div>
<div style="position:absolute;left:745px;top:431px;width:1px;height:279px;background:#bfc1c4;"></div>
<div style="position:absolute;left:815px;top:431px;width:1px;height:279px;background:#bfc1c4;"></div>
<div style="position:absolute;left:887px;top:411px;width:1px;height:299px;background:#bfc1c4;"></div>
<div style="position:absolute;left:928px;top:431px;width:1px;height:279px;background:#bfc1c4;"></div>
<div style="position:absolute;left:969px;top:431px;width:1px;height:279px;background:#bfc1c4;"></div>
<div style="position:absolute;left:1030px;top:411px;width:1px;height:325px;background:#bfc1c4;"></div>
<div class="c" style="left:4px;top:412px;width:80px;height:38px;color:#333;font-size:12px;"><span><span class="k">类型</span></span></div>
<div class="c" style="left:85px;top:412px;width:80px;height:38px;color:#333;font-size:12px;"><span><span class="k">日期</span></span></div>
<div class="c" style="left:166px;top:412px;width:98px;height:38px;color:#333;font-size:12px;"><span><span class="k">主场</span></span></div>
<div class="c" style="left:265px;top:412px;width:95px;height:38px;color:#333;font-size:12px;"><span><span class="k">比分</span>(<span class="k">半场</span>)</span></div>
<div class="c" style="left:361px;top:412px;width:40px;height:38px;color:#333;font-size:12px;"><span><span class="k">角球</span></span></div>
<div class="c" style="left:402px;top:412px;width:78px;height:38px;color:#333;font-size:12px;"><span><span class="k">客场</span></span></div>
<div class="c" style="left:481px;top:432px;width:50px;height:18px;color:#333;font-size:12px;"><span><span class="k">主</span></span></div>
<div class="c" style="left:532px;top:432px;width:88px;height:18px;color:#333;font-size:12px;"><span><span class="k">让球</span></span></div>
<div class="c" style="left:621px;top:432px;width:54px;height:18px;color:#333;font-size:12px;"><span><span class="k">客</span></span></div>
<div class="c" style="left:676px;top:432px;width:69px;height:18px;color:#333;font-size:12px;"><span><span class="k">主</span></span></div>
<div class="c" style="left:746px;top:432px;width:69px;height:18px;color:#333;font-size:12px;"><span><span class="k">和</span></span></div>
<div class="c" style="left:816px;top:432px;width:71px;height:18px;color:#333;font-size:12px;"><span><span class="k">客</span></span></div>
<div class="c" style="left:888px;top:432px;width:40px;height:18px;color:#333;font-size:12px;"><span><span class="k">胜负</span></span></div>
<div class="c" style="left:929px;top:432px;width:40px;height:18px;color:#333;font-size:12px;"><span><span class="k">让球</span></span></div>
<div class="c" style="left:970px;top:432px;width:60px;height:18px;color:#333;font-size:12px;"><span><span class="k">进球数</span></span></div>
<div class="c" style="left:4px;top:451px;width:80px;height:25px;color:#fff;font-size:12px;-webkit-text-stroke:0.2px #fff"><span><span class="k">英冠</span></span></div>
<div class="c" style="left:85px;top:451px;width:80px;height:25px;color:#333;font-size:12px;"><span>25-01-01</span></div>
<div class="c" style="left:166px;top:451px;width:98px;height:25px;color:#157f15;font-size:12px;"><span><span class="k">卢顿</span></span></div>
<div class="c" style="left:265px;top:451px;width:95px;height:25px;color:#333;font-size:12px;"><span><span style="color:#cc1515">0-1</span>(0-0)</span></div>
<div class="c" style="left:361px;top:451px;width:40px;height:25px;color:#333;font-size:12px;"><span>9-5</span></div>
<div class="c" style="left:402px;top:451px;width:78px;height:25px;color:#333;font-size:12px;"><span><span class="k">诺维奇</span></span></div>
<div class="c" style="left:481px;top:451px;width:50px;height:25px;color:#333;font-size:12px;"><span>0.97</span></div>
<div class="c" style="left:532px;top:451px;width:88px;height:25px;color:#333;font-size:12px;"><span><span class="k">平手</span></span></div>
<div class="c" style="left:621px;top:451px;width:54px;height:25px;color:#333;font-size:12px;"><span>0.92</span></div>
<div class="c" style="left:676px;top:451px;width:69px;height:25px;color:#333;font-size:12px;"><span>2.60</span></div>
<div class="c" style="left:746px;top:451px;width:69px;height:25px;color:#333;font-size:12px;"><span>3.29</span></div>
<div class="c" style="left:816px;top:451px;width:71px;height:25px;color:#333;font-size:12px;"><span>2.63</span></div>
<div class="c" style="left:888px;top:451px;width:40px;height:25px;color:#1818c0;font-size:12px;"><span><span class="k">负</span></span></div>
<div class="c" style="left:929px;top:451px;width:40px;height:25px;color:#1818c0;font-size:12px;"><span><span class="k">输</span></span></div>
<div class="c" style="left:970px;top:451px;width:60px;height:25px;color:#1818c0;font-size:12px;"><span><span class="k">小</span></span></div>
<div class="c" style="left:4px;top:477px;width:80px;height:25px;color:#fff;font-size:12px;-webkit-text-stroke:0.2px #fff"><span><span class="k">英冠</span></span></div>
<div class="c" style="left:85px;top:477px;width:80px;height:25px;color:#333;font-size:12px;"><span>24-12-29</span></div>
<div class="c" style="left:166px;top:477px;width:98px;height:25px;color:#333;font-size:12px;"><span><span class="k">斯旺西</span></span></div>
<div class="c" style="left:265px;top:477px;width:95px;height:25px;color:#333;font-size:12px;"><span><span style="color:#cc1515">2-1</span>(1-1)</span></div>
<div class="c" style="left:361px;top:477px;width:40px;height:25px;color:#333;font-size:12px;"><span>8-1</span></div>
<div class="c" style="left:402px;top:477px;width:78px;height:25px;color:#157f15;font-size:12px;"><span><span class="k">卢顿</span><span class="badge">1</span></span></div>
<div class="c" style="left:481px;top:477px;width:50px;height:25px;color:#333;font-size:12px;"><span>1.01</span></div>
<div class="c" style="left:532px;top:477px;width:88px;height:25px;color:#333;font-size:12px;"><span><span class="k">半球</span></span></div>
<div class="c" style="left:621px;top:477px;width:54px;height:25px;color:#333;font-size:12px;"><span>0.88</span></div>
<div class="c" style="left:676px;top:477px;width:69px;height:25px;color:#333;font-size:12px;"><span>2.01</span></div>
<div class="c" style="left:746px;top:477px;width:69px;height:25px;color:#333;font-size:12px;"><span>3.40</span></div>
<div class="c" style="left:816px;top:477px;width:71px;height:25px;color:#333;font-size:12px;"><span>3.61</span></div>
<div class="c" style="left:888px;top:477px;width:40px;height:25px;color:#1818c0;font-size:12px;"><span><span class="k">负</span></span></div>
<div class="c" style="left:929px;top:477px;width:40px;height:25px;color:#1818c0;font-size:12px;"><span><span class="k">输</span></span></div>
<div class="c" style="left:970px;top:477px;width:60px;height:25px;color:#d81818;font-size:12px;"><span><span class="k">大</span></span></div>
<div class="c" style="left:4px;top:503px;width:80px;height:25px;color:#fff;font-size:12px;-webkit-text-stroke:0.2px #fff"><span><span class="k">英冠</span></span></div>
<div class="c" style="left:85px;top:503px;width:80px;height:25px;color:#333;font-size:12px;"><span>24-12-26</span></div>
<div class="c" style="left:166px;top:503px;width:98px;height:25px;color:#333;font-size:12px;"><span><span class="k">布里斯托城</span></span></div>
<div class="c" style="left:265px;top:503px;width:95px;height:25px;color:#333;font-size:12px;"><span><span style="color:#cc1515">1-0</span>(0-0)</span></div>
<div class="c" style="left:361px;top:503px;width:40px;height:25px;color:#333;font-size:12px;"><span>5-3</span></div>
<div class="c" style="left:402px;top:503px;width:78px;height:25px;color:#157f15;font-size:12px;"><span><span class="k">卢顿</span></span></div>
<div class="c" style="left:481px;top:503px;width:50px;height:25px;color:#333;font-size:12px;"><span>1.05</span></div>
<div class="c" style="left:532px;top:503px;width:88px;height:25px;color:#333;font-size:12px;"><span><span class="k">半球</span></span></div>
<div class="c" style="left:621px;top:503px;width:54px;height:25px;color:#333;font-size:12px;"><span>0.84</span></div>
<div class="c" style="left:676px;top:503px;width:69px;height:25px;color:#333;font-size:12px;"><span>2.05</span></div>
<div class="c" style="left:746px;top:503px;width:69px;height:25px;color:#333;font-size:12px;"><span>3.31</span></div>
<div class="c" style="left:816px;top:503px;width:71px;height:25px;color:#333;font-size:12px;"><span>3.58</span></div>
<div class="c" style="left:888px;top:503px;width:40px;height:25px;color:#1818c0;font-size:12px;"><span><span class="k">负</span></span></div>
<div class="c" style="left:929px;top:503px;width:40px;height:25px;color:#1818c0;font-size:12px;"><span><span class="k">输</span></span></div>
<div class="c" style="left:970px;top:503px;width:60px;height:25px;color:#1818c0;font-size:12px;"><span><span class="k">小</span></span></div>
<div class="c" style="left:4px;top:529px;width:80px;height:25px;color:#fff;font-size:12px;-webkit-text-stroke:0.2px #fff"><span><span class="k">英冠</span></span></div>
<div class="c" style="left:85px;top:529px;width:80px;height:25px;color:#333;font-size:12px;"><span>24-12-21</span></div>
<div class="c" style="left:166px;top:529px;width:98px;height:25px;color:#157f15;font-size:12px;"><span><span class="k">卢顿</span></span></div>
<div class="c" style="left:265px;top:529px;width:95px;height:25px;color:#333;font-size:12px;"><span><span style="color:#cc1515">2-1</span>(0-0)</span></div>
<div class="c" style="left:361px;top:529px;width:40px;height:25px;color:#333;font-size:12px;"><span>7-3</span></div>
<div class="c" style="left:402px;top:529px;width:78px;height:25px;color:#333;font-size:12px;"><span><span class="k">德比郡</span></span></div>
<div class="c" style="left:481px;top:529px;width:50px;height:25px;color:#333;font-size:12px;"><span>0.83</span></div>
<div class="c" style="left:532px;top:529px;width:88px;height:25px;color:#333;font-size:12px;"><span><span class="k">平</span>/<span class="k">半</span></span></div>
<div class="c" style="left:621px;top:529px;width:54px;height:25px;color:#333;font-size:12px;"><span>1.06</span></div>
<div class="c" style="left:676px;top:529px;width:69px;height:25px;color:#333;font-size:12px;"><span>2.11</span></div>
<div class="c" style="left:746px;top:529px;width:69px;height:25px;color:#333;font-size:12px;"><span>3.14</span></div>
<div class="c" style="left:816px;top:529px;width:71px;height:25px;color:#333;font-size:12px;"><span>3.62</span></div>
<div class="c" style="left:888px;top:529px;width:40px;height:25px;color:#d81818;font-size:12px;"><span><span class="k">胜</span></span></div>
<div class="c" style="left:929px;top:529px;width:40px;height:25px;color:#d81818;font-size:12px;"><span><span class="k">赢</span></span></div>
<div class="c" style="left:970px;top:529px;width:60px;height:25px;color:#d81818;font-size:12px;"><span><span class="k">大</span></span></div>
<div class="c" style="left:4px;top:555px;width:80px;height:25px;color:#fff;font-size:12px;-webkit-text-stroke:0.2px #fff"><span><span class="k">英冠</span></span></div>
<div class="c" style="left:85px;top:555px;width:80px;height:25px;color:#333;font-size:12px;"><span>24-12-14</span></div>
<div class="c" style="left:166px;top:555px;width:98px;height:25px;color:#333;font-size:12px;"><span><span class="k">布莱克本</span></span></div>
<div class="c" style="left:265px;top:555px;width:95px;height:25px;color:#333;font-size:12px;"><span><span style="color:#cc1515">2-0</span>(2-0)</span></div>
<div class="c" style="left:361px;top:555px;width:40px;height:25px;color:#333;font-size:12px;"><span>4-4</span></div>
<div class="c" style="left:402px;top:555px;width:78px;height:25px;color:#157f15;font-size:12px;"><span><span class="k">卢顿</span><span class="badge">1</span></span></div>
<div class="c" style="left:481px;top:555px;width:50px;height:25px;color:#333;font-size:12px;"><span>1.00</span></div>
<div class="c" style="left:532px;top:555px;width:88px;height:25px;color:#333;font-size:12px;"><span><span class="k">平</span>/<span class="k">半</span></span></div>
<div class="c" style="left:621px;top:555px;width:54px;height:25px;color:#333;font-size:12px;"><span>0.89</span></div>
<div class="c" style="left:676px;top:555px;width:69px;height:25px;color:#333;font-size:12px;"><span>2.17</span></div>
<div class="c" style="left:746px;top:555px;width:69px;height:25px;color:#333;font-size:12px;"><span>3.33</span></div>
<div class="c" style="left:816px;top:555px;width:71px;height:25px;color:#333;font-size:12px;"><span>3.25</span></div>
<div class="c" style="left:888px;top:555px;width:40px;height:25px;color:#1818c0;font-size:12px;"><span><span class="k">负</span></span></div>
<div class="c" style="left:929px;top:555px;width:40px;height:25px;color:#1818c0;font-size:12px;"><span><span class="k">输</span></span></div>
<div class="c" style="left:970px;top:555px;width:60px;height:25px;color:#1818c0;font-size:12px;"><span><span class="k">小</span></span></div>
<div class="c" style="left:4px;top:581px;width:80px;height:25px;color:#fff;font-size:12px;-webkit-text-stroke:0.2px #fff"><span><span class="k">英冠</span></span></div>
<div class="c" style="left:85px;top:581px;width:80px;height:25px;color:#333;font-size:12px;"><span>24-12-11</span></div>
<div class="c" style="left:166px;top:581px;width:98px;height:25px;color:#157f15;font-size:12px;"><span><span class="k">卢顿</span></span></div>
<div class="c" style="left:265px;top:581px;width:95px;height:25px;color:#333;font-size:12px;"><span><span style="color:#cc1515">2-1</span>(1-1)</span></div>
<div class="c" style="left:361px;top:581px;width:40px;height:25px;color:#333;font-size:12px;"><span>10-4</span></div>
<div class="c" style="left:402px;top:581px;width:78px;height:25px;color:#333;font-size:12px;"><span><span class="k">斯托克城</span></span></div>
<div class="c" style="left:481px;top:581px;width:50px;height:25px;color:#333;font-size:12px;"><span>0.92</span></div>
<div class="c" style="left:532px;top:581px;width:88px;height:25px;color:#333;font-size:12px;"><span><span class="k">半球</span></span></div>
<div class="c" style="left:621px;top:581px;width:54px;height:25px;color:#333;font-size:12px;"><span>0.97</span></div>
<div class="c" style="left:676px;top:581px;width:69px;height:25px;color:#333;font-size:12px;"><span>1.96</span></div>
<div class="c" style="left:746px;top:581px;width:69px;height:25px;color:#333;font-size:12px;"><span>3.41</span></div>
<div class="c" style="left:816px;top:581px;width:71px;height:25px;color:#333;font-size:12px;"><span>3.77</span></div>
<div class="c" style="left:888px;top:581px;width:40px;height:25px;color:#d81818;font-size:12px;"><span><span class="k">胜</span></span></div>
<div class="c" style="left:929px;top:581px;width:40px;height:25px;color:#d81818;font-size:12px;"><span><span class="k">赢</span></span></div>
<div class="c" style="left:970px;top:581px;width:60px;height:25px;color:#d81818;font-size:12px;"><span><span class="k">大</span></span></div>
<div class="c" style="left:4px;top:607px;width:80px;height:25px;color:#fff;font-size:12px;-webkit-text-stroke:0.2px #fff"><span><span class="k">英冠</span></span></div>
<div class="c" style="left:85px;top:607px;width:80px;height:25px;color:#333;font-size:12px;"><span>24-12-07</span></div>
<div class="c" style="left:166px;top:607px;width:98px;height:25px;color:#157f15;font-size:12px;"><span><span class="k">卢顿</span></span></div>
<div class="c" style="left:265px;top:607px;width:95px;height:25px;color:#333;font-size:12px;"><span><span style="color:#cc1515">1-1</span>(1-0)</span></div>
<div class="c" style="left:361px;top:607px;width:40px;height:25px;color:#333;font-size:12px;"><span>5-8</span></div>
<div class="c" style="left:402px;top:607px;width:78px;height:25px;color:#333;font-size:12px;"><span><span class="k">斯旺西</span></span></div>
<div class="c" style="left:481px;top:607px;width:50px;height:25px;color:#333;font-size:12px;"><span>1.06</span></div>
<div class="c" style="left:532px;top:607px;width:88px;height:25px;color:#333;font-size:12px;"><span><span class="k">平</span>/<span class="k">半</span></span></div>
<div class="c" style="left:621px;top:607px;width:54px;height:25px;color:#333;font-size:12px;"><span>0.83</span></div>
<div class="c" style="left:676px;top:607px;width:69px;height:25px;color:#333;font-size:12px;"><span>2.27</span></div>
<div class="c" style="left:746px;top:607px;width:69px;height:25px;color:#333;font-size:12px;"><span>3.28</span></div>
<div class="c" style="left:816px;top:607px;width:71px;height:25px;color:#333;font-size:12px;"><span>3.08</span></div>
<div class="c" style="left:888px;top:607px;width:40px;height:25px;color:#157f15;font-size:12px;"><span><span class="k">平</span></span></div>
<div class="c" style="left:929px;top:607px;width:40px;height:25px;color:#1818c0;font-size:12px;"><span><span class="k">输</span></span></div>
<div class="c" style="left:970px;top:607px;width:60px;height:25px;color:#1818c0;font-size:12px;"><span><span class="k">小</span></span></div>
<div class="c" style="left:4px;top:633px;width:80px;height:25px;color:#fff;font-size:12px;-webkit-text-stroke:0.2px #fff"><span><span class="k">英冠</span></span></div>
<div class="c" style="left:85px;top:633px;width:80px;height:25px;color:#333;font-size:12px;"><span>24-11-30</span></div>
<div class="c" style="left:166px;top:633px;width:98px;height:25px;color:#333;font-size:12px;"><span><span class="k">诺维奇</span></span></div>
<div class="c" style="left:265px;top:633px;width:95px;height:25px;color:#333;font-size:12px;"><span><span style="color:#cc1515">4-2</span>(2-1)</span></div>
<div class="c" style="left:361px;top:633px;width:40px;height:25px;color:#333;font-size:12px;"><span>6-5</span></div>
<div class="c" style="left:402px;top:633px;width:78px;height:25px;color:#157f15;font-size:12px;"><span><span class="k">卢顿</span></span></div>
<div class="c" style="left:481px;top:633px;width:50px;height:25px;color:#333;font-size:12px;"><span>0.90</span></div>
<div class="c" style="left:532px;top:633px;width:88px;height:25px;color:#333;font-size:12px;"><span><span class="k">平</span>/<span class="k">半</span></span></div>
<div class="c" style="left:621px;top:633px;width:54px;height:25px;color:#333;font-size:12px;"><span>0.99</span></div>
<div class="c" style="left:676px;top:633px;width:69px;height:25px;color:#333;font-size:12px;"><span>2.07</span></div>
<div class="c" style="left:746px;top:633px;width:69px;height:25px;color:#333;font-size:12px;"><span>3.49</span></div>
<div class="c" style="left:816px;top:633px;width:71px;height:25px;color:#333;font-size:12px;"><span>3.33</span></div>
<div class="c" style="left:888px;top:633px;width:40px;height:25px;color:#1818c0;font-size:12px;"><span><span class="k">负</span></span></div>
<div class="c" style="left:929px;top:633px;width:40px;height:25px;color:#1818c0;font-size:12px;"><span><span class="k">输</span></span></div>
<div class="c" style="left:970px;top:633px;width:60px;height:25px;color:#d81818;font-size:12px;"><span><span class="k">大</span></span></div>
<div class="c" style="left:4px;top:659px;width:80px;height:25px;color:#fff;font-size:12px;-webkit-text-stroke:0.2px #fff"><span><span class="k">英冠</span></span></div>
<div class="c" style="left:85px;top:659px;width:80px;height:25px;color:#333;font-size:12px;"><span>24-11-28</span></div>
<div class="c" style="left:166px;top:659px;width:98px;height:25px;color:#333;font-size:12px;"><span><span class="k">利兹联</span></span></div>
<div class="c" style="left:265px;top:659px;width:95px;height:25px;color:#333;font-size:12px;"><span><span style="color:#cc1515">3-0</span>(2-0)</span></div>
<div class="c" style="left:361px;top:659px;width:40px;height:25px;color:#333;font-size:12px;"><span>9-1</span></div>
<div class="c" style="left:402px;top:659px;width:78px;height:25px;color:#157f15;font-size:12px;"><span><span class="k">卢顿</span></span></div>
<div class="c" style="left:481px;top:659px;width:50px;height:25px;color:#333;font-size:12px;"><span>1.09</span></div>
<div class="c" style="left:532px;top:659px;width:88px;height:25px;color:#333;font-size:12px;"><span><span class="k">一</span>/<span class="k">球半</span></span></div>
<div class="c" style="left:621px;top:659px;width:54px;height:25px;color:#333;font-size:12px;"><span>0.80</span></div>
<div class="c" style="left:676px;top:659px;width:69px;height:25px;color:#333;font-size:12px;"><span>1.43</span></div>
<div class="c" style="left:746px;top:659px;width:69px;height:25px;color:#333;font-size:12px;"><span>4.36</span></div>
<div class="c" style="left:816px;top:659px;width:71px;height:25px;color:#333;font-size:12px;"><span>7.20</span></div>
<div class="c" style="left:888px;top:659px;width:40px;height:25px;color:#1818c0;font-size:12px;"><span><span class="k">负</span></span></div>
<div class="c" style="left:929px;top:659px;width:40px;height:25px;color:#1818c0;font-size:12px;"><span><span class="k">输</span></span></div>
<div class="c" style="left:970px;top:659px;width:60px;height:25px;color:#d81818;font-size:12px;"><span><span class="k">大</span></span></div>
<div class="c" style="left:4px;top:685px;width:80px;height:25px;color:#fff;font-size:12px;-webkit-text-stroke:0.2px #fff"><span><span class="k">英冠</span></span></div>
<div class="c" style="left:85px;top:685px;width:80px;height:25px;color:#333;font-size:12px;"><span>24-11-23</span></div>
<div class="c" style="left:166px;top:685px;width:98px;height:25px;color:#157f15;font-size:12px;"><span><span class="k">卢顿</span></span></div>
<div class="c" style="left:265px;top:685px;width:95px;height:25px;color:#333;font-size:12px;"><span><span style="color:#cc1515">1-0</span>(1-0)</span></div>
<div class="c" style="left:361px;top:685px;width:40px;height:25px;color:#333;font-size:12px;"><span>10-4</span></div>
<div class="c" style="left:402px;top:685px;width:78px;height:25px;color:#333;font-size:12px;"><span><span class="k">赫尔城</span></span></div>
<div class="c" style="left:481px;top:685px;width:50px;height:25px;color:#333;font-size:12px;"><span>0.84</span></div>
<div class="c" style="left:532px;top:685px;width:88px;height:25px;color:#333;font-size:12px;"><span><span class="k">平</span>/<span class="k">半</span></span></div>
<div class="c" style="left:621px;top:685px;width:54px;height:25px;color:#333;font-size:12px;"><span>1.05</span></div>
<div class="c" style="left:676px;top:685px;width:69px;height:25px;color:#333;font-size:12px;"><span>2.03</span></div>
<div class="c" style="left:746px;top:685px;width:69px;height:25px;color:#333;font-size:12px;"><span>3.38</span></div>
<div class="c" style="left:816px;top:685px;width:71px;height:25px;color:#333;font-size:12px;"><span>3.55</span></div>
<div class="c" style="left:888px;top:685px;width:40px;height:25px;color:#d81818;font-size:12px;"><span><span class="k">胜</span></span></div>
<div class="c" style="left:929px;top:685px;width:40px;height:25px;color:#d81818;font-size:12px;"><span><span class="k">赢</span></span></div>
<div class="c" style="left:970px;top:685px;width:60px;height:25px;color:#1818c0;font-size:12px;"><span><span class="k">小</span></span></div>
<div class="c" style="left:4px;top:711px;width:1026px;height:25px;color:#333;font-size:12px;letter-spacing:0.25px"><span><span class="k">近</span><span style="color:#d01c24">10</span><span class="k">场</span>,<span class="k">胜</span>3<span class="k">平</span>1<span class="k">负</span>6, <span class="k">胜率</span>:<span style="color:#d01c24">30%</span> <span class="k">让胜率</span>:<span style="color:#d01c24">30%</span> <span class="k">大率</span>:<span style="color:#d01c24">50%</span> <span class="k">单率</span>:<span style="color:#d01c24">70%</span></span></div>
<div style="position:absolute;left:406px;top:388px;height:25px;line-height:25px;font-size:12px;color:#333;white-space:nowrap"><span class="k">近</span></div>
<div class="sel" style="left:422px;top:392px;width:36px;height:15px;font-size:13px;line-height:15px"><span style="padding-left:4px">10</span><svg style="position:absolute;right:3px;top:4px" width="11" height="7" viewBox="0 0 11 7"><path d="M1.2 1.2 L5.5 5.3 L9.8 1.2" stroke="#000" stroke-width="2" fill="none"/></svg></div>
<div style="position:absolute;left:464px;top:388px;height:25px;line-height:25px;font-size:12px;color:#333;white-space:nowrap"><span class="k">场</span></div>
<div style="position:absolute;left:480px;top:392px;width:11px;height:11px;background:#fff;border:1px solid #707070;border-radius:2px"></div>
<div style="position:absolute;left:497px;top:388px;height:25px;line-height:25px;font-size:12px;color:#333;white-space:nowrap"><span class="k">同客</span></div>
<div style="position:absolute;left:524px;top:392px;width:13px;height:13px;background:#0f72ec;border-radius:2px"><svg style="position:absolute;left:0;top:0" width="13" height="13" viewBox="0 0 13 13"><path d="M2.6 6.4 L5.2 8.9 L10.4 2.9" stroke="#fff" stroke-width="2" fill="none"/></svg></div>
<div style="position:absolute;left:537px;top:388px;height:25px;line-height:25px;font-size:12px;color:#333;white-space:nowrap"><span class="k">英冠</span></div>
<div style="position:absolute;left:562px;top:392px;width:13px;height:13px;background:#0f72ec;border-radius:2px"><svg style="position:absolute;left:0;top:0" width="13" height="13" viewBox="0 0 13 13"><path d="M2.6 6.4 L5.2 8.9 L10.4 2.9" stroke="#fff" stroke-width="2" fill="none"/></svg></div>
<div style="position:absolute;left:575px;top:388px;height:25px;line-height:25px;font-size:12px;color:#333;white-space:nowrap"><span class="k">英联杯</span></div>
<div style="position:absolute;left:610px;top:392px;width:13px;height:13px;background:#0f72ec;border-radius:2px"><svg style="position:absolute;left:0;top:0" width="13" height="13" viewBox="0 0 13 13"><path d="M2.6 6.4 L5.2 8.9 L10.4 2.9" stroke="#fff" stroke-width="2" fill="none"/></svg></div>
<div style="position:absolute;left:623px;top:388px;height:25px;line-height:25px;font-size:12px;color:#333;white-space:nowrap"><span class="k">球会友谊</span></div>
<div class="sel" style="left:518px;top:412px;width:59px;height:16px;font-size:13px;line-height:16px"><span style="padding-left:4px">Crow*</span><svg style="position:absolute;right:3px;top:5px" width="11" height="7" viewBox="0 0 11 7"><path d="M1.2 1.2 L5.5 5.3 L9.8 1.2" stroke="#000" stroke-width="2" fill="none"/></svg></div>
<div class="sel" style="left:586px;top:412px;width:49px;height:16px;font-size:13px;line-height:16px"><span style="padding-left:4px"><span class="k">终指</span></span><svg style="position:absolute;right:3px;top:5px" width="11" height="7" viewBox="0 0 11 7"><path d="M1.2 1.2 L5.5 5.3 L9.8 1.2" stroke="#000" stroke-width="2" fill="none"/></svg></div>
<div class="sel" style="left:718px;top:412px;width:67px;height:16px;font-size:13px;line-height:16px"><span style="padding-left:4px"><span class="k">平均值</span></span><svg style="position:absolute;right:3px;top:5px" width="11" height="7" viewBox="0 0 11 7"><path d="M1.2 1.2 L5.5 5.3 L9.8 1.2" stroke="#000" stroke-width="2" fill="none"/></svg></div>
<div class="sel" style="left:794px;top:412px;width:49px;height:16px;font-size:13px;line-height:16px"><span style="padding-left:4px"><span class="k">终指</span></span><svg style="position:absolute;right:3px;top:5px" width="11" height="7" viewBox="0 0 11 7"><path d="M1.2 1.2 L5.5 5.3 L9.8 1.2" stroke="#000" stroke-width="2" fill="none"/></svg></div>
<div class="sel" style="left:933px;top:412px;width:49px;height:16px;font-size:13px;line-height:16px"><span style="padding-left:4px"><span class="k">全场</span></span><svg style="position:absolute;right:3px;top:5px" width="11" height="7" viewBox="0 0 11 7"><path d="M1.2 1.2 L5.5 5.3 L9.8 1.2" stroke="#000" stroke-width="2" fill="none"/></svg></div>
</body></html>
